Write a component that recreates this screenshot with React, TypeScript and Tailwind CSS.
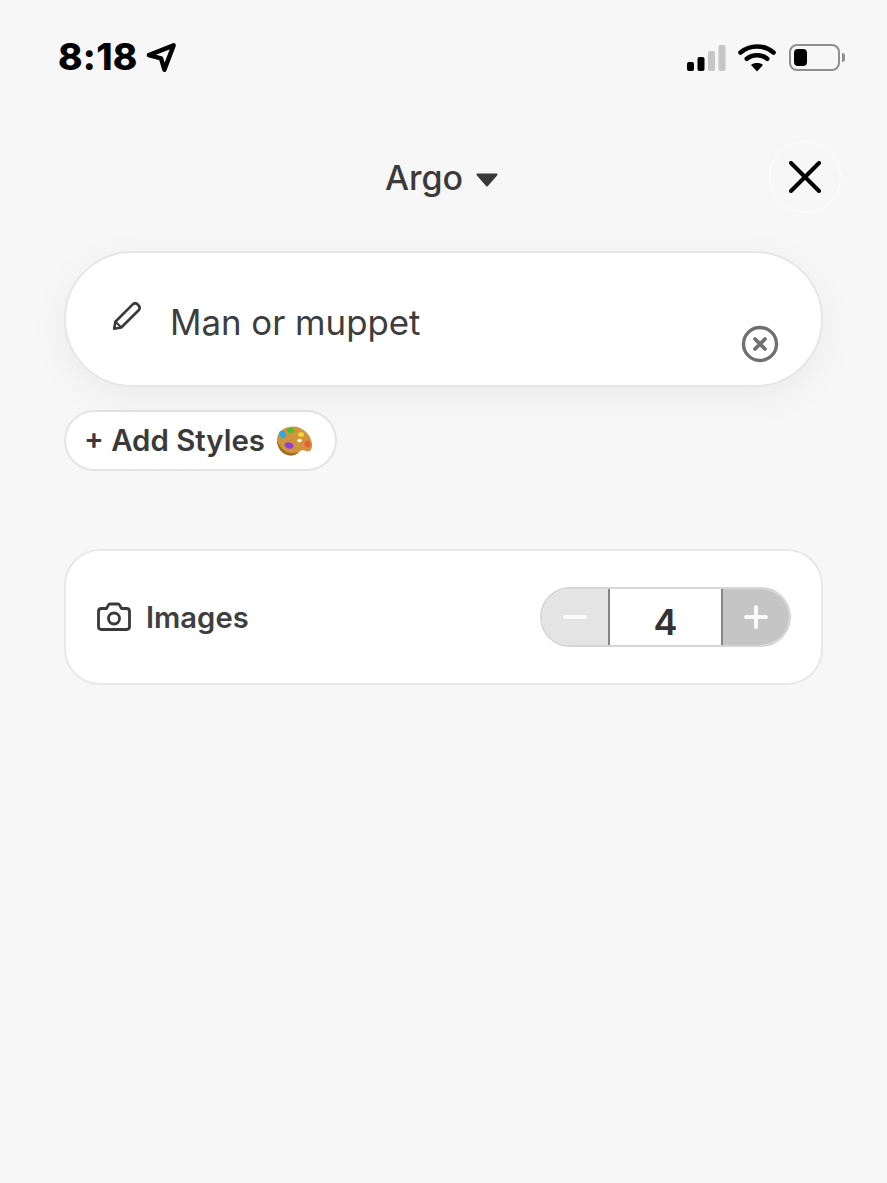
import React from "react";

function Palette() {
  return (
    <svg width="38" height="32" viewBox="0 0 38 32" className="shrink-0">
      <path d="M2 15C2 7 9 1.500 18 1.500C27 1.500 36 9 37 19C37.500 24 35 28 31 26C28 24.500 26 25 24 27C21 30.500 16 31.500 11 29.500C5 27 2 21 2 15Z" fill="#d0953c" />
      <path d="M2 15C2 21 5 27 11 29.500C16 31.500 21 30.500 24 27C20 28.500 14 28.500 10 26C6 23.500 3.500 19 2 15Z" fill="#a06a28" />
      <ellipse cx="7.500" cy="9.500" rx="3" ry="4" fill="#29a8ee" transform="rotate(-30 7.500 9.500)" />
      <ellipse cx="15.500" cy="5.500" rx="3.400" ry="2.400" fill="#3fc233" />
      <ellipse cx="26" cy="9.500" rx="3" ry="2.200" fill="#f5d636" />
      <ellipse cx="14" cy="20.500" rx="4.400" ry="3" fill="#8f3ddb" transform="rotate(15 14 20.500)" />
      <ellipse cx="32.500" cy="19" rx="2.800" ry="3.400" fill="#ef5a3a" />
      <ellipse cx="24.500" cy="15.500" rx="2.200" ry="1.800" fill="#fff" />
    </svg>
  );
}

export default function App() {
  return (
    <div className="min-h-[1183px] w-full bg-[#f7f7f7] text-[#3a3a3a] font-['Inter',sans-serif] overflow-hidden">
      {/* status bar */}
      <div className="h-[141px] pl-[58px] pr-[42px] pt-[35px] flex items-start justify-between">
        <div className="flex items-center gap-[8px] h-[44px]">
          <span className="text-[37px] leading-[44px] font-extrabold text-black tracking-[0.3px]">8:18</span>
          <svg width="31" height="31" viewBox="0 0 32 32" fill="none">
            <path d="M3 13.500L28.500 3.500L19 28.500L15.500 17L3 13.500Z" fill="#f7f7f7" stroke="#000" strokeWidth="4.600" strokeLinejoin="round" />
          </svg>
        </div>
        <div className="flex items-center h-[44px] pt-[1px]">
          <svg width="40" height="28" viewBox="0 0 40 28" className="mr-[12px]">
            <rect x="1" y="18" width="7" height="9" rx="2" fill="#000" />
            <rect x="11.500" y="13" width="7" height="14" rx="2" fill="#000" />
            <rect x="22" y="7" width="7" height="20" rx="2" fill="#c6c6c6" />
            <rect x="32.500" y="1" width="7" height="26" rx="2" fill="#c6c6c6" />
          </svg>
          <svg width="38" height="28" viewBox="0 0 38 28" fill="none" className="mr-[13px]">
            <path d="M2.500 8.500C12 0.500 26 0.500 35.500 8.500" stroke="#000" strokeWidth="4.600" strokeLinecap="round" />
            <path d="M8.800 14.800C14.500 10 23.500 10 29.200 14.800" stroke="#000" strokeWidth="4.600" strokeLinecap="round" />
            <path d="M13 21C16 18.400 22 18.400 25 21L19 27.500L13 21Z" fill="#000" />
          </svg>
          <div className="flex items-center">
            <div className="w-[51px] h-[27px] rounded-[8px] border-[2px] border-[#8f8f8f] p-[3px] flex">
              <div className="w-[13px] h-full rounded-[4px] bg-black" />
            </div>
            <div className="ml-[2px] w-[3px] h-[9px] rounded-r-[4px] bg-[#8f8f8f]" />
          </div>
        </div>
      </div>

      {/* header */}
      <div className="relative h-[72px] flex items-center justify-center">
        <div className="flex items-center gap-[12px] pt-[2px] ml-[-3px]">
          <span className="text-[34px] leading-[40px] font-[550] text-[#3a3a3a]">Argo</span>
          <svg width="24" height="16" viewBox="0 0 24 16" className="mt-[4px]">
            <path d="M2.500 2.500H21.500L12 13.500Z" fill="#3a3a3a" stroke="#3a3a3a" strokeWidth="2" strokeLinejoin="round" />
          </svg>
        </div>
        <button className="absolute right-[46px] top-0 w-[72px] h-[72px] rounded-full border border-[#fdfdfd] flex items-center justify-center">
          <svg width="32" height="32" viewBox="0 0 32 32" fill="none">
            <path d="M2 2L30 30M30 2L2 30" stroke="#000" strokeWidth="4" strokeLinecap="round" />
          </svg>
        </button>
      </div>

      <div className="px-[64px] pt-[38px]">
        {/* prompt */}
        <div className="relative h-[136px] rounded-[68px] bg-white border-[2px] border-[#e6e6e6] shadow-[0_10px_40px_rgba(0,0,0,0.05)] pl-[46px] pt-[44px] flex items-start gap-[28px]">
          <svg width="30" height="30" viewBox="0 0 34 34" fill="none" className="mt-[4px] shrink-0">
            <path d="M2.500 31.500L3.800 23.500L23.500 3.800C25 2.300 27.500 2.300 29.500 4.300C31.500 6.300 31.700 8.800 30.200 10.500L10.500 30L2.500 31.500Z" stroke="#3a3a3a" strokeWidth="3" strokeLinejoin="round" />
            <path d="M4 23.500L10.500 30" stroke="#3a3a3a" strokeWidth="2.400" />
          </svg>
          <span className="text-[34.8px] leading-[50px] text-[#3d3d3d] font-normal">Man or muppet</span>
          <svg width="38" height="38" viewBox="0 0 38 38" fill="none" className="absolute right-[42px] top-[72px]">
            <circle cx="19" cy="19" r="16.500" stroke="#707070" strokeWidth="3.400" />
            <path d="M14 14L24 24M24 14L14 24" stroke="#707070" strokeWidth="3.800" strokeLinecap="round" />
          </svg>
        </div>

        {/* add styles */}
        <div className="mt-[23px] w-[273px] h-[61px] rounded-full bg-white border-[2px] border-[#e3e3e3] flex items-center pl-[18px] gap-[10px]">
          <span className="text-[29.4px] leading-[36px] font-semibold text-[#3a3a3a] whitespace-nowrap">+ Add Styles</span>
          <Palette />
        </div>

        {/* images card */}
        <div className="mt-[78px] h-[136px] rounded-[36px] bg-white border-[2px] border-[#e8e8e8] pl-[31px] pr-[30px] flex items-center justify-between">
          <div className="flex items-center gap-[15px]">
            <svg width="34" height="30" viewBox="0 0 34 30" fill="none">
              <path d="M4.500 6.500H9.500L11.500 2.800C11.800 2.200 12.300 2 13 2H21C21.700 2 22.200 2.200 22.500 2.800L24.500 6.500H29.500C31.200 6.500 32.500 7.800 32.500 9.500V24.500C32.500 26.200 31.200 27.500 29.500 27.500H4.500C2.800 27.500 1.500 26.200 1.500 24.500V9.500C1.500 7.800 2.800 6.500 4.500 6.500Z" stroke="#3a3a3a" strokeWidth="2.800" strokeLinejoin="round" />
              <circle cx="17" cy="16.500" r="5.500" stroke="#3a3a3a" strokeWidth="2.800" />
            </svg>
            <span className="text-[29.2px] leading-[36px] font-semibold text-[#3f3f3f] pt-[1px]">Images</span>
          </div>
          <div className="w-[251px] h-[60px] rounded-full overflow-hidden border-[2px] border-[#d6d6d6] flex">
            <div className="w-[66px] bg-[#e4e4e4] flex items-center justify-center">
              <div className="w-[24px] h-[4px] rounded-full bg-[#fafafa]" />
            </div>
            <div className="flex-1 bg-white border-x-[2px] border-x-[#858585] flex items-center justify-center pt-[9px]">
              <span className="text-[36px] leading-[40px] font-semibold text-[#333]">4</span>
            </div>
            <div className="w-[66px] bg-[#c5c5c5] flex items-center justify-center relative">
              <div className="w-[24px] h-[4px] rounded-full bg-[#fafafa]" />
              <div className="absolute w-[4px] h-[24px] rounded-full bg-[#fafafa]" />
            </div>
          </div>
        </div>
      </div>
    </div>
  );
}
